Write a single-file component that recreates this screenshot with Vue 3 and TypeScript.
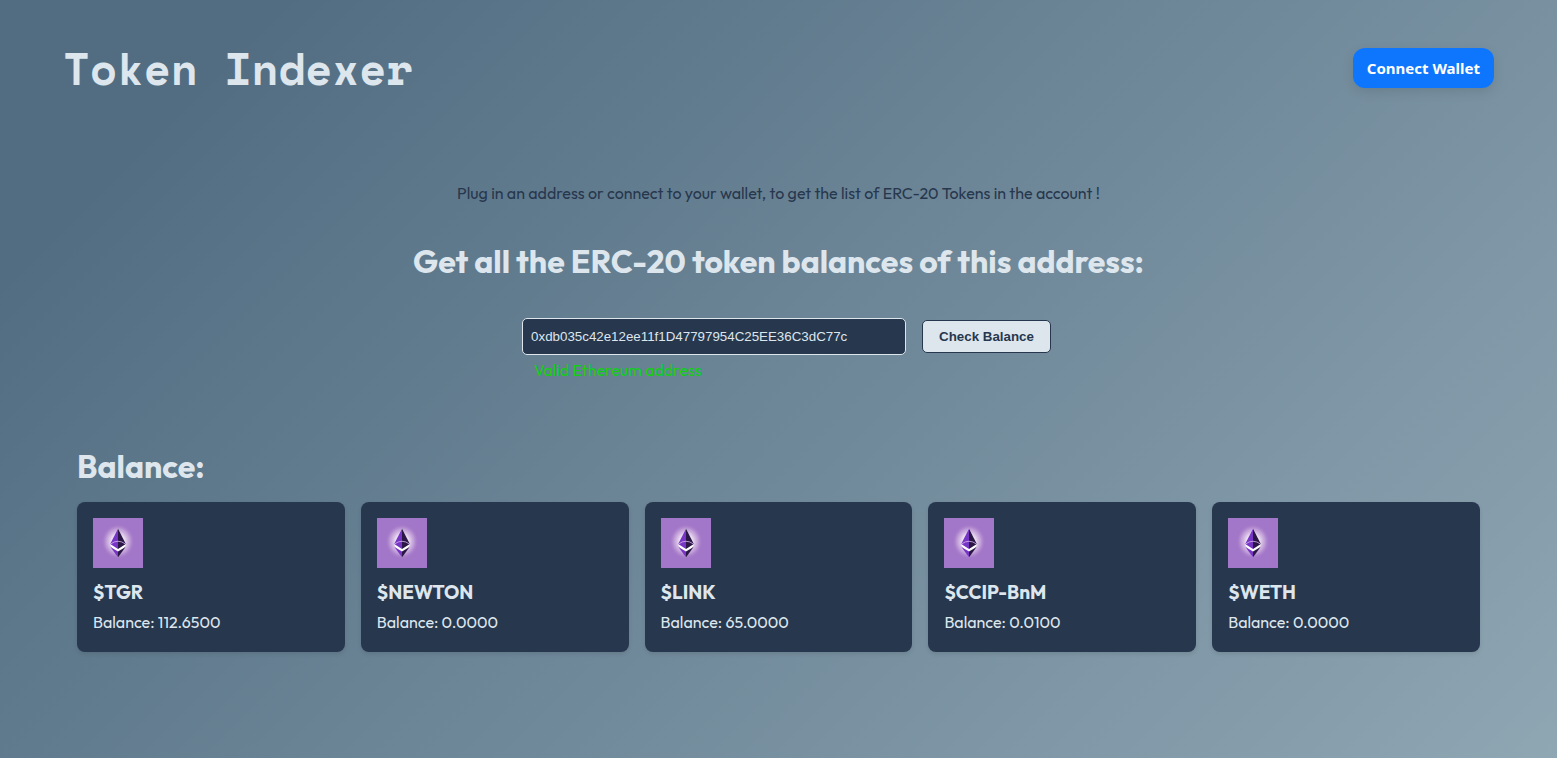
<script setup lang="ts">
import { computed, ref } from 'vue'

interface Token {
  symbol: string
  balance: string
}

const address = ref('0xdb035c42e12ee11f1D47797954C25EE36C3dC77c')
const isValid = computed(() => /^0x[0-9a-fA-F]{40}$/.test(address.value))

const tokens: Token[] = [
  { symbol: 'TGR', balance: '112.6500' },
  { symbol: 'NEWTON', balance: '0.0000' },
  { symbol: 'LINK', balance: '65.0000' },
  { symbol: 'CCIP-BnM', balance: '0.0100' },
  { symbol: 'WETH', balance: '0.0000' },
]
</script>

<template>
  <div class="page">
    <header class="top">
      <h1 class="brand">Token Indexer</h1>
      <button class="connect" type="button">Connect Wallet</button>
    </header>
    <main>
      <section class="lookup">
        <p class="intro">Plug in an address or connect to your wallet, to get the list of ERC-20 Tokens in the account !</p>
        <h2 class="heading"><label for="address">Get all the ERC-20 token balances of this address:</label></h2>
        <form class="form" @submit.prevent>
          <div class="field">
            <input id="address" v-model="address" class="address" type="text" spellcheck="false" />
            <p class="status">{{ isValid ? 'Valid Ethereum address' : '' }}</p>
          </div>
          <button class="check" type="submit">Check Balance</button>
        </form>
      </section>
      <section class="balances">
        <h2 class="heading">Balance:</h2>
        <ul class="cards">
          <li v-for="token in tokens" :key="token.symbol" class="card">
            <svg class="logo" viewBox="0 0 50 50" aria-hidden="true">
              <defs>
                <radialGradient :id="'glow-' + token.symbol">
                  <stop offset="0" stop-color="#fff" />
                  <stop offset="0.4" stop-color="#f3e8f6" stop-opacity="0.9" />
                  <stop offset="0.7" stop-color="#dcc2e6" stop-opacity="0.5" />
                  <stop offset="1" stop-color="#a276c8" stop-opacity="0" />
                </radialGradient>
              </defs>
              <rect width="50" height="50" fill="#a276c8" />
              <ellipse cx="25" cy="23.500" rx="17" ry="18" :fill="`url(#glow-${token.symbol})`" />
              <path d="M25 10.500 17 26.500 25 39.500l8-13z" fill="#fff" />
              <path d="M25 10.500 17.200 26 25 31z" fill="#7635c4" />
              <path d="M25 10.500v20.500l7.800-5z" fill="#2b1746" />
              <path d="M17.500 29 25 33.500v6z" fill="#7635c4" />
              <path d="M32.500 29 25 33.500v6z" fill="#2b1746" />
              <path d="M17.500 26q7.500-5.500 15 0" fill="none" stroke="#d9b8ee" stroke-width="0.800" />
            </svg>
            <h3 class="symbol">${{ token.symbol }}</h3>
            <p class="amount">Balance: {{ token.balance }}</p>
          </li>
        </ul>
      </section>
    </main>
  </div>
</template>

<style>
body {
  margin: 0;
}
</style>

<style scoped>
.page {
  box-sizing: border-box;
  min-height: 100vh;
  padding: 39px 63px;
  background: linear-gradient(135deg, #526d82 12%, #8fa6b3 100%);
  color: #dde6ed;
  font-family: Outfit, Lato, "Liberation Sans", sans-serif;
  font-size: 16px;
  line-height: 20px;
}

h1, h2, h3, p, ul {
  margin: 0;
  padding: 0;
}

.top {
  display: flex;
  justify-content: space-between;
  align-items: flex-start;
}

.brand {
  font: bold 44px/60px "Space Mono", "DejaVu Sans Mono", monospace;
}

.connect {
  height: 40px;
  margin-top: 9px;
  padding: 0 14px;
  border: 0;
  border-radius: 12px;
  background: #0e76fd;
  color: #fff;
  box-shadow: 0 4px 12px rgba(0, 0, 0, 0.1);
  font: bold 15px/20px "Noto Sans", sans-serif;
}

.lookup {
  display: flex;
  flex-direction: column;
  align-items: center;
  padding-top: 84px;
}

.intro {
  color: #27374d;
}

.heading {
  font-size: 32px;
  font-weight: bold;
  line-height: 40px;
}

.lookup .heading {
  margin-top: 38px;
}

.form {
  display: flex;
  align-items: flex-start;
  gap: 16px;
  margin-top: 37px;
  padding-left: 16px;
}

.address {
  display: block;
  box-sizing: border-box;
  width: 384px;
  height: 37px;
  padding: 0 8px;
  border: 1px solid #dde6ed;
  border-radius: 5px;
  background: #27374d;
  color: #dde6ed;
  font-family: "Liberation Sans", Arial, sans-serif;
}

.status {
  min-height: 20px;
  margin: 5px 0 0 12px;
  color: #11cf16;
}

.check {
  height: 33px;
  margin-top: 2px;
  padding: 0 16px;
  border: 1px solid #27374d;
  border-radius: 5px;
  background: #dde6ed;
  color: #27374d;
  font-family: "Liberation Sans", Arial, sans-serif;
  font-weight: bold;
}

.balances {
  margin-top: 66px;
  padding: 0 14px;
}

.cards {
  display: grid;
  grid-template-columns: repeat(5, 1fr);
  gap: 16px;
  margin-top: 16px;
  list-style: none;
}

.card {
  padding: 16px 16px 20px;
  border-radius: 8px;
  background: #27374d;
  box-shadow: 0 2px 4px rgba(0, 0, 0, 0.1);
}

.logo {
  display: block;
  width: 50px;
  height: 50px;
}

.symbol {
  margin-top: 12px;
  font-size: 19px;
  font-weight: bold;
  line-height: 24px;
}

.amount {
  margin-top: 8px;
}
</style>
